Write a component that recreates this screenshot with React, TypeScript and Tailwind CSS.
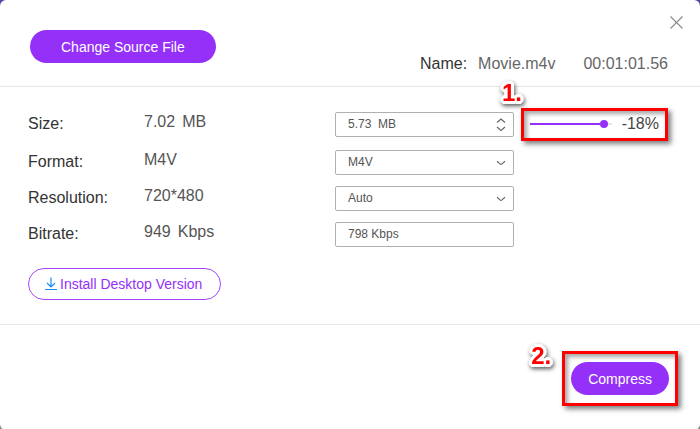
import { useState, type ReactNode } from "react";

const fieldClass =
  "block h-[25px] w-full appearance-none rounded-xs border border-[#b0b0b0] bg-white px-3 text-xs text-[#555] outline-none focus:border-[#9530f8]";

function Row({ id, label, value, children }: { id: string; label: string; value: string[]; children: ReactNode }) {
  return (
    <div className="grid h-9 grid-cols-[116px_191px_179px_1fr] items-center">
      <label htmlFor={id} className="text-[#333]">{label}</label>
      <span className="flex gap-[7px] pb-1 text-[#555]">
        {value.map((part) => (
          <span key={part}>{part}</span>
        ))}
      </span>
      {children}
    </div>
  );
}

function SelectField({ id, options }: { id: string; options: string[] }) {
  return (
    <div className="relative">
      <select id={id} className={fieldClass}>
        {options.map((option) => (
          <option key={option}>{option}</option>
        ))}
      </select>
      <svg
        viewBox="0 0 10 6"
        className="pointer-events-none absolute top-2.5 right-2 h-1.5 w-2.5"
        fill="none"
        stroke="#666"
        strokeWidth="1.2"
      >
        <path d="M1 1.2 L4 3.9 Q5 4.7 6 3.9 L9 1.2" />
      </svg>
    </div>
  );
}

function StepNumber({ className, children }: { className: string; children: ReactNode }) {
  return (
    <span
      className={`absolute text-2xl leading-6 font-bold text-[#f00] [text-shadow:3px_0_#fff,-3px_0_#fff,0_3px_#fff,0_-3px_#fff,2px_2px_#fff,-2px_2px_#fff,2px_-2px_#fff,-2px_-2px_#fff,3px_1px_#fff,-3px_1px_#fff,3px_-1px_#fff,-3px_-1px_#fff,1px_3px_#fff,-1px_3px_#fff,1px_-3px_#fff,-1px_-3px_#fff] drop-shadow-[1px_2px_2px_rgba(0,0,0,0.65)] ${className}`}
    >
      {children}
    </span>
  );
}

const highlightClass =
  "relative border-[3px] border-[#f00] shadow-[3px_3px_5px_rgba(0,0,0,0.5),inset_3px_3px_4px_rgba(0,0,0,0.35)]";

export default function App() {
  const [size, setSize] = useState(82);
  const min = 0;
  const max = 87;
  const filled = ((size - min) / (max - min)) * 100;

  return (
    <div className="min-h-screen bg-linear-to-b from-[#5842a8] from-50% to-[#888] to-50% font-['Liberation_Sans',Arial,sans-serif]">
      <main className="flex min-h-screen flex-col rounded-md bg-white text-base">
        <header className="flex items-start justify-between border-b border-[#e6e6e6] pb-2.5 pl-[30px]">
          <button type="button" className="mt-[30px] h-[33px] rounded-full bg-[#9530f8] px-[31px] text-sm text-white">
            Change Source File
          </button>
          <div className="flex flex-col items-end">
            <button type="button" aria-label="Close" className="mt-4 mr-[17px]">
              <svg viewBox="0 0 13 13" className="size-[13px]" stroke="#888" strokeWidth="1.1">
                <path d="M0.5 0.5 L12.5 12.5 M12.5 0.5 L0.5 12.5" />
              </svg>
            </button>
            <p className="mt-[23px] mr-8 flex leading-6 text-[#666]">
              <span className="mr-[11px] text-[#333]">Name:</span>
              <span className="mr-7">Movie.m4v</span>
              <span>00:01:01.56</span>
            </p>
          </div>
        </header>

        <section className="border-b border-[#e6e6e6] pt-[19px] pb-6 pl-7">
          <div className="mb-0.5">
            <Row id="size" label="Size:" value={["7.02", "MB"]}>
              <div className="relative">
                <input id="size" type="text" defaultValue={"5.73\u00a0 MB"} className={fieldClass} />
                <svg
                  viewBox="0 0 10 14"
                  className="pointer-events-none absolute top-1.5 right-2 h-3.5 w-2.5"
                  fill="none"
                  stroke="#666"
                  strokeWidth="1.2"
                >
                  <path d="M1 4.5 L5 1 L9 4.5 M1 9 L5 12.5 L9 9" />
                </svg>
              </div>
              <div className={`${highlightClass} ml-[7px] flex h-[33px] w-[147px] items-center justify-between px-1.5`}>
                <StepNumber className="-top-[30px] -left-[22px]">1.</StepNumber>
                <input
                  type="range"
                  aria-label="Compression"
                  min={min}
                  max={max}
                  value={size}
                  onChange={(e) => setSize(Number(e.target.value))}
                  className="h-0.5 w-[82px] appearance-none [&::-webkit-slider-thumb]:size-2 [&::-webkit-slider-thumb]:appearance-none [&::-webkit-slider-thumb]:rounded-full [&::-webkit-slider-thumb]:bg-[#9530f8]"
                  style={{ background: `linear-gradient(to right, #9530f8 ${filled}%, #e4e4e4 ${filled}%)` }}
                />
                <output className="text-[#444]">{size - 100}%</output>
              </div>
            </Row>
          </div>
          <Row id="format" label="Format:" value={["M4V"]}>
            <SelectField id="format" options={["M4V", "MP4", "MOV"]} />
          </Row>
          <Row id="resolution" label="Resolution:" value={["720*480"]}>
            <SelectField id="resolution" options={["Auto", "720*480"]} />
          </Row>
          <Row id="bitrate" label="Bitrate:" value={["949", "Kbps"]}>
            <input id="bitrate" type="text" defaultValue="798 Kbps" className={fieldClass} />
          </Row>
          <button
            type="button"
            className="mt-4 flex h-8 items-center rounded-full border border-[#a347f9] pr-[18px] pl-[15px] text-sm text-[#9530f8]"
          >
            <svg viewBox="0 0 14 14" className="mr-0.5 size-3.5" fill="none" stroke="#168cff" strokeWidth="1.2">
              <path d="M7 0.5 V10 M3 6 L7 10 L11 6 M1 12.5 H13" />
            </svg>
            Install Desktop Version
          </button>
        </section>

        <footer className="flex justify-end pt-[26px] pr-[22px] pb-6">
          <div className={`${highlightClass} px-1.5 py-2`}>
            <StepNumber className="-top-2.5 -left-[34px]">2.</StepNumber>
            <button type="button" className="h-[33px] rounded-full bg-[#9530f8] px-[17px] text-sm text-white">
              Compress
            </button>
          </div>
        </footer>
      </main>
    </div>
  );
}
